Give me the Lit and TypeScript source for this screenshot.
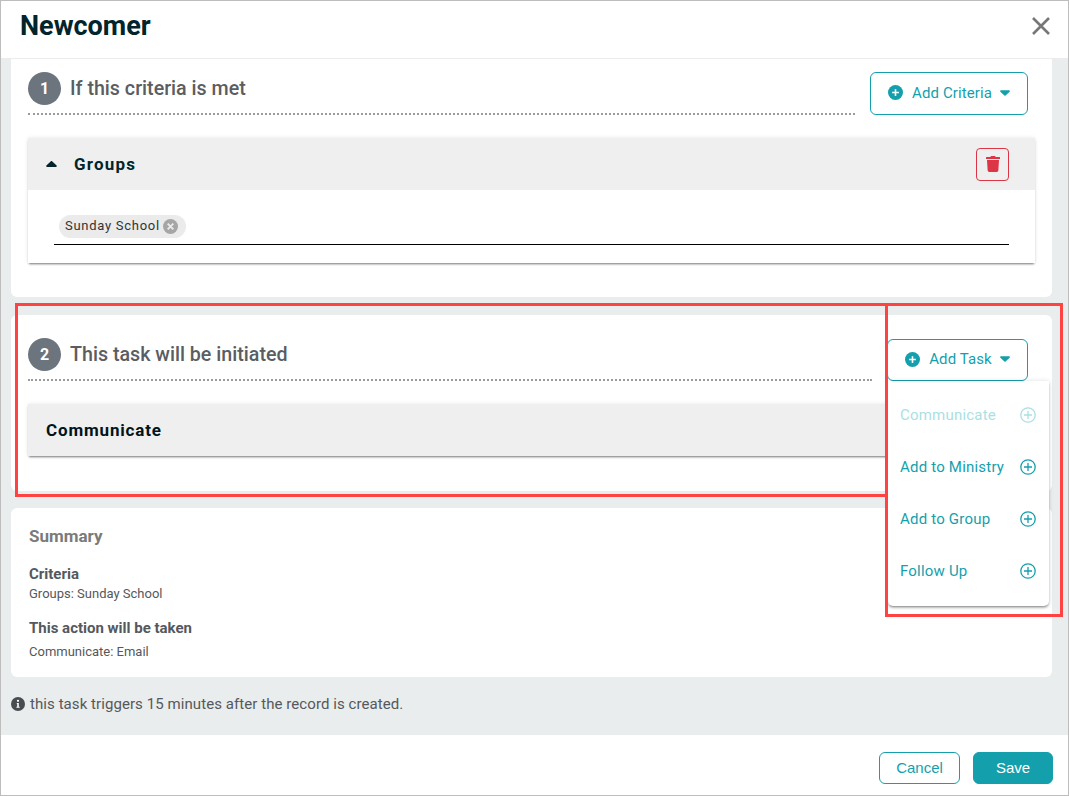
import { LitElement, css, html } from 'lit'
import { customElement } from 'lit/decorators.js'

const plusSolid = html`<svg class="plus" viewBox="0 0 16 16" width="15" height="15">
	<circle cx="8" cy="8" r="8" fill="currentColor"></circle>
	<path d="M8 4.4v7.2M4.4 8h7.2" stroke="#fff" stroke-width="1.7"></path>
</svg>`

const plusOutline = html`<svg viewBox="0 0 16 16" width="16" height="16">
	<circle cx="8" cy="8" r="7.2" fill="none" stroke="currentColor" stroke-width="1.3"></circle>
	<path d="M8 4v8M4 8h8" stroke="currentColor" stroke-width="1.3"></path>
</svg>`

const caretDown = html`<svg class="caret" viewBox="0 0 11 6" width="10" height="6">
	<path d="M1 0h9c.8 0 1.2 1 .6 1.5L6.100 5.700c-.4.400-.9.400-1.200 0L.4 1.500C-.2 1 .2 0 1 0z" fill="currentColor"></path>
</svg>`

@customElement('app-root')
export class AppRoot extends LitElement {
	tasks = [
		{ label: 'Communicate', disabled: true },
		{ label: 'Add to Ministry', disabled: false },
		{ label: 'Add to Group', disabled: false },
		{ label: 'Follow Up', disabled: false },
	]

	render() {
		return html`
		<div class="modal">
			<header class="top">
				<h1>Newcomer</h1>
				<svg class="close" viewBox="0 0 18 18" width="18" height="18">
					<path d="M1 1l16 16M17 1L1 17" stroke="#777" stroke-width="2.600"></path>
				</svg>
			</header>
			<main class="content">
				<section class="card first">
					<div class="head">
						<div class="title">
							<span class="num">1</span>
							<h2>If this criteria is met</h2>
						</div>
						<button class="add criteria">${plusSolid}<span>Add Criteria</span>${caretDown}</button>
					</div>
					<div class="panel">
						<div class="panel-head">
							<svg class="up" viewBox="0 0 11 6" width="11" height="6">
								<path d="M1 6h9c.8 0 1.200-1 .6-1.500L6.100.3c-.4-.4-.9-.4-1.200 0L.4 4.500C-.2 5 .2 6 1 6z" fill="#02242a"></path>
							</svg>
							<span class="panel-name groups">Groups</span>
							<button class="trash">
								<svg viewBox="0 0 448 512" width="14" height="16">
									<path fill="#dc3545" d="M432 32H312l-9.400-18.700A24 24 0 0 0 281.100 0H166.800a23.720 23.720 0 0 0-21.400 13.300L136 32H16A16 16 0 0 0 0 48v32a16 16 0 0 0 16 16h416a16 16 0 0 0 16-16V48a16 16 0 0 0-16-16zM53.200 467a48 48 0 0 0 47.900 45h245.800a48 48 0 0 0 47.900-45L416 128H32z"></path>
								</svg>
							</button>
						</div>
						<div class="panel-body">
							<div class="field">
								<span class="chip"><span class="chip-text">Sunday School</span>
									<svg viewBox="0 0 16 16" width="15" height="15">
										<circle cx="8" cy="8" r="8" fill="#a6a6a6"></circle>
										<path d="M5 5l6 6M11 5l-6 6" stroke="#ebebeb" stroke-width="2"></path>
									</svg>
								</span>
							</div>
						</div>
					</div>
				</section>

				<section class="card second">
					<div class="head">
						<div class="title">
							<span class="num">2</span>
							<h2>This task will be initiated</h2>
						</div>
						<div class="menu-wrap">
							<button class="add task">${plusSolid}<span>Add Task</span>${caretDown}</button>
							<div class="menu">
								${this.tasks.map(t => html`
								<div class="item ${t.disabled ? 'off' : ''}">
									<span>${t.label}</span>${plusOutline}
								</div>`)}
							</div>
						</div>
					</div>
					<div class="panel">
						<div class="panel-head"><span class="panel-name flush">Communicate</span></div>
					</div>
				</section>

				<section class="card summary">
					<h3>Summary</h3>
					<h4 class="criteria-head">Criteria</h4>
					<p class="criteria-text">Groups: Sunday School</p>
					<h4 class="action-head">This action will be taken</h4>
					<p class="action-text">Communicate: Email</p>
				</section>

				<div class="note">
					<svg viewBox="0 0 16 16" width="14" height="14">
						<circle cx="8" cy="8" r="8" fill="#494c50"></circle>
						<path d="M6.600 6.900h2.300v4.300h1v1.200H6.200v-1.200h.9V8.100h-.5z" fill="#fff"></path>
						<circle cx="8" cy="4.400" r="1.300" fill="#fff"></circle>
					</svg>
					<span>this task triggers 15 minutes after the record is created.</span>
				</div>
			</main>
			<footer class="bottom">
				<button class="cancel">Cancel</button>
				<button class="save">Save</button>
			</footer>
			<div class="mark left"></div>
			<div class="mark right"></div>
		</div>
	`
	}

	static styles = css`
	:host {
		display: block;
		font-family: Roboto, "Liberation Sans", sans-serif;
	}

	* {
		box-sizing: border-box;
	}

	.modal {
		position: relative;
		display: flex;
		flex-direction: column;
		height: 796px;
		border: 1px solid #bdbdbd;
		background: #fff;
		overflow: hidden;
	}

	.top {
		display: flex;
		align-items: center;
		justify-content: space-between;
		height: 58px;
		flex: none;
		padding: 0 18px 8px 19px;
		border-bottom: 1px solid #ececec;
	}

	h1 {
		margin: 0;
		font-size: 27px;
		font-weight: 700;
		color: #02242a;
	}

	.content {
		flex: 1;
		display: flex;
		flex-direction: column;
		padding: 0 16px 0 10px;
		background: #e9eded;
	}

	.card {
		background: #fff;
		border-radius: 6px;
		padding: 0 17px;
	}

	.first {
		height: 238px;
		padding-top: 13px;
		border-radius: 0 0 6px 6px;
	}

	.second {
		height: 176px;
		margin-top: 18px;
		padding-top: 23px;
	}

	.head {
		display: flex;
		gap: 15px;
		padding-right: 7px;
	}

	.title {
		flex: 1;
		display: flex;
		align-items: flex-start;
		gap: 9px;
		height: 43px;
		border-bottom: 2px dotted #9b9b9b;
	}

	.num {
		width: 33px;
		height: 33px;
		border-radius: 50%;
		background: #6c757d;
		color: #fff;
		display: flex;
		align-items: center;
		justify-content: center;
		font-size: 16px;
		font-weight: 700;
	}

	h2 {
		margin: 0;
		font-size: 19.660px;
		line-height: 34px;
		font-weight: 500;
		color: #5a5d61;
	}

	button {
		font-family: inherit;
		cursor: pointer;
	}

	.add {
		display: flex;
		align-items: center;
		justify-content: center;
		height: 43px;
		background: #fff;
		border: 1px solid #149fad;
		border-radius: 6px;
		color: #149fad;
		font-size: 15px;
		letter-spacing: 0.1px;
		padding: 0 0 2px;
	}

	.add .plus {
		margin-right: 9px;
	}

	.add .caret {
		margin-left: 8px;
	}

	.criteria {
		width: 158px;
	}

	.task {
		width: 141px;
		height: 42px;
		margin-top: 1px;
	}

	.menu-wrap {
		position: relative;
	}

	.menu {
		position: absolute;
		top: 43px;
		left: 1px;
		width: 161px;
		height: 225px;
		padding: 8px 13px 0 12px;
		background: #fff;
		border-radius: 0 0 5px 5px;
		box-shadow: 0 2px 3px -1px rgba(0, 0, 0, 0.5), 0 0 5px rgba(0, 0, 0, 0.12);
		z-index: 2;
	}

	.item {
		display: flex;
		align-items: center;
		justify-content: space-between;
		height: 52px;
		font-size: 15px;
		letter-spacing: 0.2px;
		color: #149fad;
	}

	.item.off {
		color: #aadfe4;
	}

	.panel {
		margin-top: 23px;
		background: #fff;
		box-shadow: 0 2px 2px -1px rgba(0, 0, 0, 0.5), 0 0 4px rgba(0, 0, 0, 0.1);
	}

	.panel-head {
		display: flex;
		align-items: center;
		height: 52px;
		padding: 0 26px 0 18px;
		background: #efefef;
	}

	.panel-name {
		margin-left: 17px;
		font-size: 17px;
		font-weight: 700;
		letter-spacing: 0.84px;
		color: #02242a;
		flex: 1;
	}

	.panel-name.groups {
		letter-spacing: 1.200px;
	}

	.panel-name.flush {
		margin-left: 0;
		color: #02141a;
	}

	.trash {
		width: 33px;
		height: 33px;
		display: flex;
		align-items: center;
		justify-content: center;
		padding: 0;
		background: transparent;
		border: 1px solid #dc3545;
		border-radius: 4px;
	}

	.panel-body {
		height: 73px;
		padding: 25px 26px 0 26px;
	}

	.field {
		height: 30px;
		padding-left: 5px;
		border-bottom: 1px solid #000;
	}

	.chip {
		display: inline-flex;
		align-items: center;
		gap: 3px;
		height: 23px;
		padding: 0 8px 0 6px;
		border-radius: 12px;
		background: #ebebeb;
		color: #333;
		font-size: 13px;
		letter-spacing: 0.72px;
		white-space: nowrap;
	}

	.chip-text {
		margin-top: -2px;
	}

	.summary {
		height: 169px;
		margin-top: 17px;
		padding: 18px 18px 0;
	}

	h3 {
		margin: 0;
		font-size: 17px;
		line-height: 20px;
		font-weight: 700;
		color: #7a7a7a;
	}

	h4 {
		margin: 0;
		font-size: 15px;
		line-height: 18px;
		font-weight: 700;
		color: #55585c;
	}

	p {
		margin: 0;
		font-size: 13px;
		line-height: 16px;
		color: #55585c;
	}

	.criteria-head {
		margin-top: 19px;
	}

	.criteria-text {
		margin-top: 3px;
	}

	.action-head {
		margin-top: 17px;
	}

	.action-text {
		margin-top: 7px;
	}

	.note {
		display: flex;
		align-items: center;
		gap: 5px;
		margin-top: 18px;
		font-size: 15px;
		letter-spacing: 0.07px;
		color: #55585c;
	}

	.bottom {
		flex: none;
		height: 60px;
		display: flex;
		justify-content: flex-end;
		gap: 13px;
		padding: 17px 15px 0 0;
	}

	.cancel,
	.save {
		width: 81px;
		height: 32px;
		border-radius: 6px;
		font-family: "Liberation Sans", sans-serif;
		font-size: 15px;
		padding: 0 0 2px;
	}

	.cancel {
		background: #fff;
		border: 1px solid #149fad;
		color: #149fad;
	}

	.save {
		width: 80px;
		background: #149fad;
		border: 1px solid #149fad;
		color: #fff;
	}

	/* red annotation boxes drawn over the screenshot */
	.mark {
		position: absolute;
		border: 3px solid #ff4343;
		pointer-events: none;
		z-index: 3;
	}

	.mark.left {
		left: 14px;
		top: 302px;
		width: 872px;
		height: 194px;
		border-right: none;
	}

	.mark.right {
		left: 884px;
		top: 302px;
		width: 178px;
		height: 314px;
	}
	`
}

declare global {
	interface HTMLElementTagNameMap {
		'app-root': AppRoot
	}
}
